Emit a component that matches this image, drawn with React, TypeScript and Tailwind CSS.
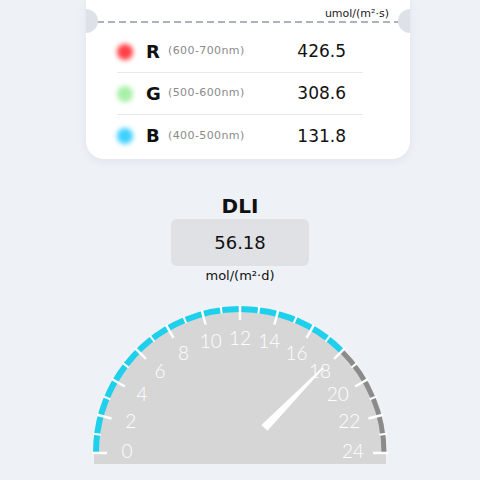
import React from "react";

const ROWS = [
  { key: "R", range: "(600-700nm)", value: "426.5", dot: "bg-[#ff3f46]" },
  { key: "G", range: "(500-600nm)", value: "308.6", dot: "bg-[#a6f0a6]" },
  { key: "B", range: "(400-500nm)", value: "131.8", dot: "bg-[#3fd0ff]" },
];

// gauge geometry (svg local coords)
const CX = 150;
const CY = 152;
const MAX = 24;
const VALUE = 17.9;

const polar = (r: number, v: number) => {
  const a = Math.PI - (v / MAX) * Math.PI;
  return [CX + r * Math.cos(a), CY - r * Math.sin(a)];
};

function Gauge() {
  const [bx, by] = polar(144, 18);
  const ticks = Array.from({ length: MAX + 1 }, (_, i) => i);
  return (
    <svg width="300" height="170" viewBox="0 0 300 170" className="mx-auto block">
      <path d="M 4 152 A 146 146 0 0 1 296 152 L 296 163 L 4 163 Z" fill="#d6d6d6" />
      <path d={`M 6 152 A 144 144 0 0 1 ${bx} ${by}`} fill="none" stroke="#1fd0ec" strokeWidth="6" />
      <path d={`M ${bx} ${by} A 144 144 0 0 1 294 152`} fill="none" stroke="#8b8b8b" strokeWidth="5" />
      {ticks.map((i) => {
        const major = i % 2 === 0;
        const [x1, y1] = polar(major ? 133 : 140.5, i);
        const [x2, y2] = polar(148, i);
        return (
          <line
            key={i}
            x1={x1}
            y1={y1}
            x2={x2}
            y2={y2}
            stroke="#ffffff"
            strokeWidth={major ? 2.5 : 2}
          />
        );
      })}
      {ticks
        .filter((i) => i % 2 === 0)
        .map((i) => {
          const [x, y] = polar(113, i);
          return (
            <text
              key={i}
              x={x}
              y={y - 3}
              fill="#ffffff"
              fontSize="19"
              fontWeight="300"
              fontFamily="Lato, 'DejaVu Sans', sans-serif"
              textAnchor="middle"
              dominantBaseline="central"
            >
              {i}
            </text>
          );
        })}
      {/* needle, drawn along +x then turned to the value */}
      <polygon
        points="35,-4.2 119,-0.8 119,0.8 35,4.2"
        fill="#ffffff"
        style={{ transform: `translate(${CX}px, ${CY}px) rotate(${-(180 - (VALUE / MAX) * 180)}deg)` }}
      />
    </svg>
  );
}

export default function App() {
  return (
    <div className="h-[480px] w-[480px] overflow-hidden bg-[#eef1f6] font-['DejaVu_Sans',sans-serif] text-[#111]">
      <div className="relative ml-[86px] w-[324px] overflow-hidden rounded-b-[18px] bg-white pb-[2px] shadow-[0_2px_10px_rgba(60,70,90,0.08)]">
        <div className="absolute left-[-12px] top-[9px] h-[24px] w-[24px] rounded-full bg-[#dde2e9]" />
        <div className="absolute right-[-12px] top-[9px] h-[24px] w-[24px] rounded-full bg-[#dde2e9]" />
        <div className="pr-[21px] pt-[8px] text-right text-[11px] leading-[12px] text-[#222]">
          umol/(m²·s)
        </div>
        <div className="mx-[11px] mt-[1px] h-[2px] bg-[linear-gradient(to_right,#aab3be_64%,transparent_64%)] bg-[length:11px_2px]" />
        <div className="ml-[31px] mt-[8px] w-[246px]">
          {ROWS.map((r, i) => (
            <div
              key={r.key}
              className={`flex h-[42px] items-center ${i < 2 ? "border-b border-[#e8e8e8]" : ""}`}
            >
              <div className={`h-[16px] w-[16px] rounded-full blur-[2.5px] ${r.dot}`} />
              <div className="ml-[13px] w-[14px] text-[18px] font-bold leading-none">{r.key}</div>
              <div className="ml-[8px] text-[11px] tracking-[0.4px] text-[#8a8a8a]">{r.range}</div>
              <div className="ml-auto pr-[17px] text-[17px] leading-none">{r.value}</div>
            </div>
          ))}
        </div>
      </div>

      <div className="mt-[35px] flex flex-col items-center">
        <div className="text-[20px] font-bold leading-[24px]">DLI</div>
        <div className="mt-[1px] flex h-[47px] w-[138px] items-center justify-center rounded-[6px] bg-[#dfe1e5] text-[18px]">
          56.18
        </div>
        <div className="mt-[2px] text-[13px] leading-[16px]">mol/(m²·d)</div>
      </div>

      <div className="mt-[17px]">
        <Gauge />
      </div>
    </div>
  );
}
